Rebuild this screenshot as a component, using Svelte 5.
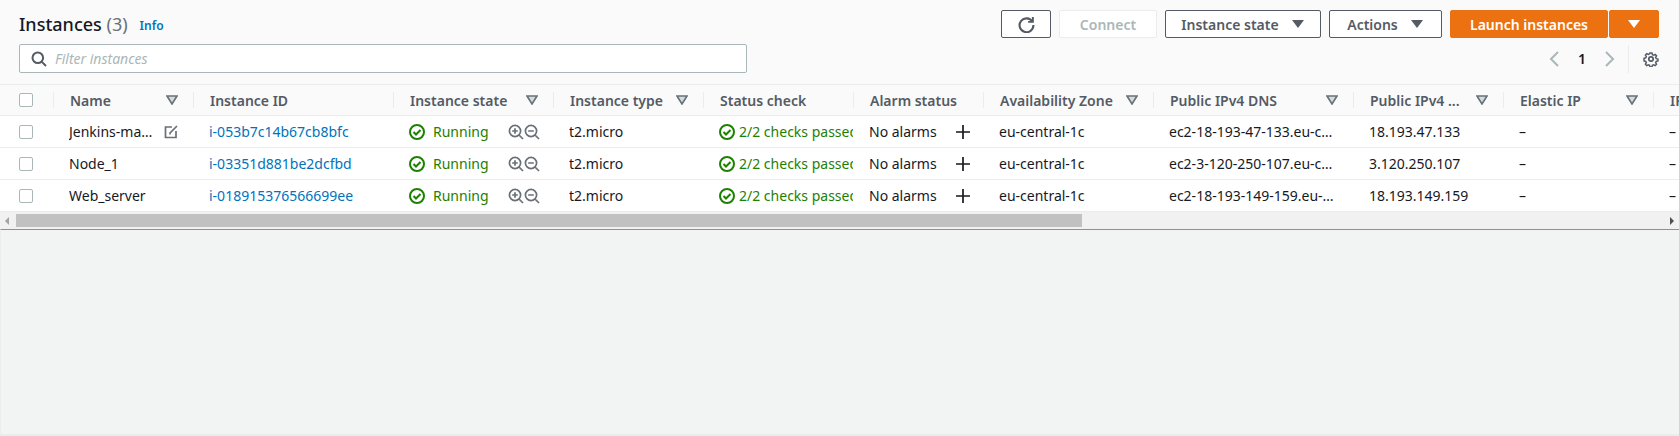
<script>
	const columns = [
		{ label: 'Name', width: 140, filter: true },
		{ label: 'Instance ID', width: 200, filter: false },
		{ label: 'Instance state', width: 160, filter: true },
		{ label: 'Instance type', width: 150, filter: true },
		{ label: 'Status check', width: 150, filter: false },
		{ label: 'Alarm status', width: 130, filter: false },
		{ label: 'Availability Zone', width: 170, filter: true },
		{ label: 'Public IPv4 DNS', width: 200, filter: true },
		{ label: 'Public IPv4 ...', width: 150, filter: true },
		{ label: 'Elastic IP', width: 150, filter: true },
		{ label: 'IPv6 IPs', width: 150, filter: true }
	];

	const instances = [
		{
			name: 'Jenkins-master',
			edit: true,
			id: 'i-053b7c14b67cb8bfc',
			dns: 'ec2-18-193-47-133.eu-central-1.compute.amazonaws.com',
			ip: '18.193.47.133'
		},
		{
			name: 'Node_1',
			edit: false,
			id: 'i-03351d881be2dcfbd',
			dns: 'ec2-3-120-250-107.eu-central-1.compute.amazonaws.com',
			ip: '3.120.250.107'
		},
		{
			name: 'Web_server',
			edit: false,
			id: 'i-018915376566699ee',
			dns: 'ec2-18-193-149-159.eu-central-1.compute.amazonaws.com',
			ip: '18.193.149.159'
		}
	];
</script>

{#snippet check()}
	<svg class="check" viewBox="0 0 16 16" width="16" height="16">
		<circle cx="8" cy="8" r="7" fill="none" stroke="#1d8102" stroke-width="2" />
		<path d="M4.5 8l2.5 2.5 4.5-4.5" fill="none" stroke="#1d8102" stroke-width="2" />
	</svg>
{/snippet}

{#snippet caret()}
	<svg viewBox="0 0 14 10" width="14" height="10"><path d="M1 1h12L7 9z" fill="currentColor" /></svg>
{/snippet}

<div class="page">
	<header class="top">
		<div class="bar">
			<h1>Instances <span class="count">(3)</span></h1>
			<a class="info" href="#info">Info</a>
			<div class="actions">
				<button class="btn refresh" aria-label="Refresh">
					<svg viewBox="0 0 16 16" width="17" height="17" fill="none" stroke="#545b64" stroke-width="2">
						<path d="M13.6 5.4A6.5 6.5 0 1 0 14.5 8.5" />
						<path d="M14 1v4.5H9.5" stroke-width="1.8" />
					</svg>
				</button>
				<button class="btn connect" disabled>Connect</button>
				<button class="btn state">Instance state {@render caret()}</button>
				<button class="btn act">Actions {@render caret()}</button>
				<button class="btn primary launch">Launch instances</button>
				<button class="btn primary more" aria-label="More">{@render caret()}</button>
			</div>
		</div>
		<div class="bar second">
			<label class="filter">
				<svg viewBox="0 0 16 16" width="16" height="16" fill="none" stroke="#545b64" stroke-width="2">
					<circle cx="6.8" cy="6.8" r="5.3" />
					<path d="M10.6 10.6L15 15" />
				</svg>
				<input placeholder="Filter instances" />
			</label>
			<nav class="pager">
				<svg viewBox="0 0 12 18" width="12" height="18" fill="none" stroke="#aab7b8" stroke-width="2"><path d="M10 2L3 9l7 7" /></svg>
				<span class="page-no">1</span>
				<svg viewBox="0 0 12 18" width="12" height="18" fill="none" stroke="#aab7b8" stroke-width="2"><path d="M2 2l7 7-7 7" /></svg>
				<span class="rule"></span>
				<svg viewBox="0 0 16 16" width="16" height="16" fill="none" stroke="#545b64" stroke-width="1.7">
					<circle cx="8" cy="8" r="2.2" />
					<path d="M6.8 1h2.4l.4 2 1.5.7 1.8-1 1.6 1.7-1.1 1.7.7 1.5 2 .5v2.3l-2 .5-.7 1.5 1.1 1.7-1.6 1.6-1.8-1-1.5.7-.4 2H6.8l-.4-2-1.5-.7-1.8 1-1.6-1.6 1.1-1.7-.7-1.5-2-.5V7.1l2-.5.7-1.5-1.1-1.7 1.6-1.7 1.8 1 1.5-.7z" transform="translate(1.1 1.1) scale(.86)" />
				</svg>
			</nav>
		</div>
	</header>

	<div class="scroller">
		<table>
			<colgroup>
				<col style="width: 53px" />
				{#each columns as col}
					<col style="width: {col.width}px" />
				{/each}
			</colgroup>
			<thead>
				<tr>
					<th class="pick"><span class="box"></span></th>
					{#each columns as col}
						<th>
							<div class="head">
								<span class="label">{col.label}</span>
								{#if col.filter}
									<svg viewBox="0 0 12 10" width="12" height="10">
										<path d="M1 1h10L6 9z" fill="#d5dbdb" stroke="#687078" stroke-width="1.6" />
									</svg>
								{/if}
							</div>
						</th>
					{/each}
				</tr>
			</thead>
			<tbody>
				{#each instances as row}
					<tr>
						<td class="pick"><span class="box"></span></td>
						<td>
							<div class="name">
								<span class="trim">{row.name}</span>
								{#if row.edit}
									<svg viewBox="0 0 14 14" width="14" height="14" fill="none" stroke="#687078" stroke-width="1.7">
										<path d="M8 2H1.5v10.5H12V6" />
										<path d="M13 1L6 8v1.5" />
									</svg>
								{/if}
							</div>
						</td>
						<td><a class="link" href="#id">{row.id}</a></td>
						<td>
							<div class="running">
								{@render check()}
								<span class="ok">Running</span>
								<span class="zooms">
									<svg viewBox="0 0 16 16" width="16" height="16" fill="none" stroke="#687078" stroke-width="1.7">
										<circle cx="7" cy="7" r="5.6" /><path d="M11 11l4 4M4.2 7h5.6M7 4.2v5.6" />
									</svg>
									<svg viewBox="0 0 16 16" width="16" height="16" fill="none" stroke="#687078" stroke-width="1.7">
										<circle cx="7" cy="7" r="5.6" /><path d="M11 11l4 4M4.2 7h5.6" />
									</svg>
								</span>
							</div>
						</td>
						<td>t2.micro</td>
						<td class="clip">
							<div class="passed">{@render check()}<span class="ok">2/2 checks passed</span></div>
						</td>
						<td>
							<div class="alarm">
								<span>No alarms</span>
								<svg viewBox="0 0 14 14" width="14" height="14" stroke="#16191f" stroke-width="1.7"><path d="M0 7h14M7 0v14" /></svg>
							</div>
						</td>
						<td>eu-central-1c</td>
						<td><div class="trim">{row.dns}</div></td>
						<td>{row.ip}</td>
						<td>–</td>
						<td>–</td>
					</tr>
				{/each}
			</tbody>
		</table>
		<div class="scrollbar">
			<span class="arrow left"></span>
			<span class="thumb"></span>
			<span class="arrow right"></span>
		</div>
	</div>

	<div class="lower"></div>
</div>

<style>
	:global(body) {
		margin: 0;
		background: #f2f3f3;
	}
	.page {
		display: flex;
		flex-direction: column;
		height: 436px;
		overflow: hidden;
		font-family: 'Noto Sans', sans-serif;
		font-size: 14px;
		color: #16191f;
		box-sizing: border-box;
	}
	.top {
		background: #fafafa;
		height: 84px;
		box-sizing: border-box;
		padding: 10px 20px 0 19px;
		display: flex;
		flex-direction: column;
		gap: 6px;
	}
	.bar {
		display: flex;
		align-items: center;
		height: 28px;
	}
	.second {
		height: 29px;
		justify-content: space-between;
	}
	h1 {
		margin: 0;
		font-size: 18px;
		font-weight: 500;
		line-height: 26px;
	}
	.count {
		color: #687078;
		font-weight: 400;
	}
	.info {
		margin: 3px 0 0 12px;
		font-size: 12px;
		font-weight: 600;
		color: #0073bb;
		text-decoration: none;
	}
	.actions {
		margin-left: auto;
		display: flex;
		gap: 8px;
	}
	.btn {
		height: 28px;
		box-sizing: border-box;
		display: flex;
		align-items: center;
		justify-content: center;
		gap: 12px;
		padding: 0;
		background: #fff;
		border: 1px solid #545b64;
		border-radius: 2px;
		color: #545b64;
		font: 600 14px 'Noto Sans', sans-serif;
	}
	.refresh {
		width: 50px;
	}
	.connect {
		width: 98px;
		border-color: #eaeded;
		color: #aab7b8;
	}
	.state {
		width: 156px;
	}
	.act {
		width: 113px;
	}
	.btn.primary {
		background: #ec7211;
		border-color: #ec7211;
		color: #fff;
	}
	.launch {
		width: 158px;
		margin-right: -7px;
	}
	.more {
		width: 50px;
	}
	.filter {
		width: 728px;
		height: 29px;
		box-sizing: border-box;
		display: flex;
		align-items: center;
		gap: 8px;
		padding-left: 11px;
		background: #fff;
		border: 1px solid #aab7b8;
		border-radius: 2px;
	}
	input {
		flex: 1;
		border: none;
		outline: none;
		background: none;
		padding: 0;
		font: italic 14px 'Noto Sans', sans-serif;
	}
	input::placeholder {
		color: #aab7b8;
		opacity: 1;
	}
	.pager {
		display: flex;
		align-items: center;
		height: 28px;
	}
	.page-no {
		width: 44px;
		text-align: center;
		font-weight: 600;
	}
	.rule {
		width: 1px;
		height: 28px;
		background: #eaeded;
		margin: 0 14px 0 12px;
	}
	.scroller {
		background: #fff;
	}
	table {
		table-layout: fixed;
		width: 1803px;
		border-collapse: separate;
		border-spacing: 0;
	}
	th {
		height: 31px;
		padding: 0;
		background: #fafafa;
		border-top: 1px solid #eaeded;
		border-bottom: 1px solid #eaeded;
		text-align: left;
		font-weight: 600;
		color: #545b64;
		box-sizing: content-box;
		height: 30px;
	}
	.head {
		display: flex;
		align-items: center;
		justify-content: space-between;
		height: 16px;
		padding: 0 15px 0 16px;
		border-left: 1px solid #eaeded;
	}
	.label {
		white-space: nowrap;
	}
	td {
		height: 31px;
		padding: 0 0 0 16px;
		border-bottom: 1px solid #eaeded;
		white-space: nowrap;
		overflow: hidden;
	}
	th.pick,
	td.pick {
		padding: 0 0 0 19px;
	}
	.box {
		display: block;
		width: 14px;
		height: 14px;
		box-sizing: border-box;
		background: #fff;
		border: 1px solid #aab7b8;
		border-radius: 2px;
	}
	.name {
		display: flex;
		align-items: center;
		justify-content: space-between;
		padding-right: 15px;
	}
	.trim {
		display: block;
		min-width: 0;
		max-width: 168px;
		overflow: hidden;
		text-overflow: ellipsis;
	}
	.name .trim {
		max-width: 87px;
	}
	.name svg {
		flex: none;
	}
	.link {
		color: #0073bb;
		text-decoration: none;
	}
	.ok {
		color: #1d8102;
	}
	.running,
	.passed,
	.alarm {
		display: flex;
		align-items: center;
	}
	.check {
		flex: none;
	}
	.running .ok {
		margin-left: 8px;
	}
	.passed .ok {
		margin-left: 4px;
	}
	.zooms {
		display: flex;
		margin-left: 19px;
	}
	.alarm {
		gap: 19px;
	}
	.scrollbar {
		position: relative;
		height: 17px;
		background: #f1f1f1;
		display: flex;
		align-items: center;
		justify-content: space-between;
		padding: 0 5px;
	}
	.thumb {
		position: absolute;
		left: 16px;
		top: 2px;
		width: 1066px;
		height: 13px;
		background: #c1c1c1;
	}
	.arrow {
		width: 0;
		height: 0;
		border-top: 4px solid transparent;
		border-bottom: 4px solid transparent;
	}
	.arrow.left {
		border-right: 4px solid #a3a3a3;
	}
	.arrow.right {
		border-left: 4px solid #505050;
	}
	.lower {
		flex: 1;
		background: #f2f3f3;
		border-top: 1px solid #879596;
		border-left: 1px solid #eaeded;
		border-bottom: 2px solid #eaeded;
	}
</style>
